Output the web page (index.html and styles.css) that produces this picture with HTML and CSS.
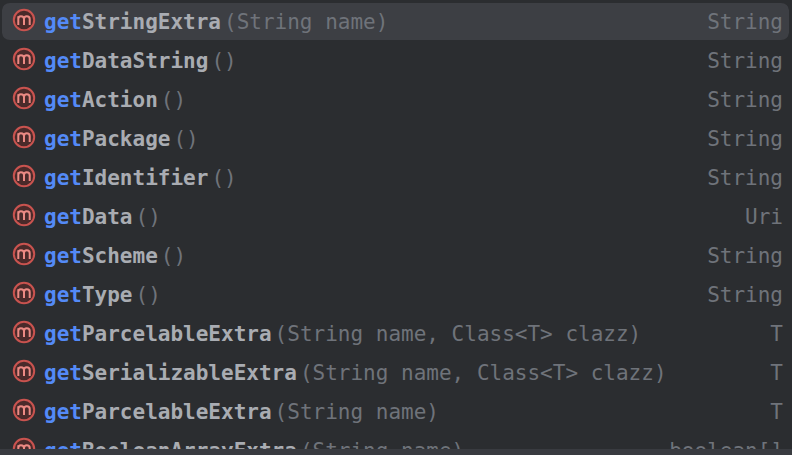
FILE: index.html
```html
<!DOCTYPE html>
<html lang="en">
<head>
  <meta charset="UTF-8" />
  <title>Completion popup</title>
  <link rel="stylesheet" href="styles.css">
</head>
<body>
  <svg class="defs" width="0" height="0">
    <symbol id="icon-method" viewBox="0 0 24 24">
      <circle cx="12" cy="12" r="10.2" fill="#4a2a2a" stroke="#c9534f" stroke-width="2" />
      <path d="M6.300 17V8.200M6.300 11c0-1.700 1-2.700 2.600-2.700s3.100 1 3.100 2.700v6M12 11c0-1.700 1.100-2.700 2.700-2.700s3 1 3 2.700v6" fill="none" stroke="#ec8a84" stroke-width="2" />
    </symbol>
  </svg>

  <div class="popup">
    <ul class="list">
      <li class="row selected">
        <svg class="icon"><use href="#icon-method" /></svg>
        <span class="name"><b>get</b>StringExtra</span>
        <span class="params">(String name)</span>
        <span class="type">String</span>
      </li>
      <li class="row">
        <svg class="icon"><use href="#icon-method" /></svg>
        <span class="name"><b>get</b>DataString</span>
        <span class="params">()</span>
        <span class="type">String</span>
      </li>
      <li class="row">
        <svg class="icon"><use href="#icon-method" /></svg>
        <span class="name"><b>get</b>Action</span>
        <span class="params">()</span>
        <span class="type">String</span>
      </li>
      <li class="row">
        <svg class="icon"><use href="#icon-method" /></svg>
        <span class="name"><b>get</b>Package</span>
        <span class="params">()</span>
        <span class="type">String</span>
      </li>
      <li class="row">
        <svg class="icon"><use href="#icon-method" /></svg>
        <span class="name"><b>get</b>Identifier</span>
        <span class="params">()</span>
        <span class="type">String</span>
      </li>
      <li class="row">
        <svg class="icon"><use href="#icon-method" /></svg>
        <span class="name"><b>get</b>Data</span>
        <span class="params">()</span>
        <span class="type">Uri</span>
      </li>
      <li class="row">
        <svg class="icon"><use href="#icon-method" /></svg>
        <span class="name"><b>get</b>Scheme</span>
        <span class="params">()</span>
        <span class="type">String</span>
      </li>
      <li class="row">
        <svg class="icon"><use href="#icon-method" /></svg>
        <span class="name"><b>get</b>Type</span>
        <span class="params">()</span>
        <span class="type">String</span>
      </li>
      <li class="row">
        <svg class="icon"><use href="#icon-method" /></svg>
        <span class="name"><b>get</b>ParcelableExtra</span>
        <span class="params">(String name, Class&lt;T&gt; clazz)</span>
        <span class="type">T</span>
      </li>
      <li class="row">
        <svg class="icon"><use href="#icon-method" /></svg>
        <span class="name"><b>get</b>SerializableExtra</span>
        <span class="params">(String name, Class&lt;T&gt; clazz)</span>
        <span class="type">T</span>
      </li>
      <li class="row">
        <svg class="icon"><use href="#icon-method" /></svg>
        <span class="name"><b>get</b>ParcelableExtra</span>
        <span class="params">(String name)</span>
        <span class="type">T</span>
      </li>
      <li class="row">
        <svg class="icon"><use href="#icon-method" /></svg>
        <span class="name"><b>get</b>BooleanArrayExtra</span>
        <span class="params">(String name)</span>
        <span class="type">boolean[]</span>
      </li>
    </ul>
    <div class="footer"></div>
  </div>
</body>
</html>
```

FILE: styles.css
```css
html, body {
  margin: 0;
  height: 100%;
  overflow: hidden;
}

body {
  background: #2b2d30;
  font-family: "DejaVu Sans Mono", monospace;
  font-size: 21px;
}

.defs {
  display: block;
}

.popup {
  display: flex;
  flex-direction: column;
  height: 100%;
}

.list {
  flex: 1;
  min-height: 0;
  overflow: hidden;
  list-style: none;
  margin: 0;
  padding: 2px 3px 0 2px;
}

.row {
  display: flex;
  align-items: center;
  height: 39px;
  box-sizing: border-box;
  padding: 0 6px 0 10px;
  border-top: 1px solid transparent;
  border-bottom: 1px solid transparent;
  background-clip: padding-box;
  border-radius: 8px;
  white-space: nowrap;
}

.selected {
  background-color: #3d3f44;
}

.icon {
  width: 24px;
  height: 24px;
  flex: none;
  margin: -3px 8px 0 0;
}

.name {
  color: #a9acb2;
  font-weight: 700;
}

.name b {
  color: #548af7;
  font-weight: 700;
}

.params {
  color: #6f737a;
  margin-left: 3px;
}

.type {
  color: #6f737a;
  margin-left: auto;
}

.footer {
  height: 6px;
  flex: none;
  background: #393b40;
}
```
